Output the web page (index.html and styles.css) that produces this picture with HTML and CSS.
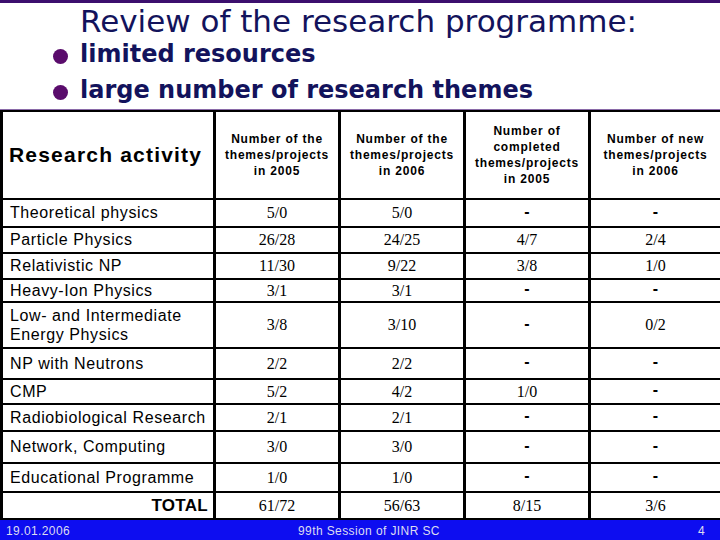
FILE: index.html
```html
<!DOCTYPE html>
<html>
<head>
<meta charset="utf-8">
<link rel="stylesheet" href="styles.css">
</head>
<body>
<div class="slide">
  <header class="head">
    <h1 class="title">Review of the research programme:</h1>
    <ul class="bullets">
      <li><span class="dot"></span>limited resources</li>
      <li><span class="dot"></span>large number of research themes</li>
    </ul>
  </header>
  <table class="grid">
    <colgroup>
      <col class="c1"><col class="c2"><col class="c3"><col class="c4"><col class="c5">
    </colgroup>
    <tr class="r-head">
      <th class="lbl big">Research activity</th>
      <th>Number of the themes/projects in 2005</th>
      <th>Number of the themes/projects in 2006</th>
      <th>Number of completed themes/projects in 2005</th>
      <th>Number of new themes/projects in 2006</th>
    </tr>
    <tr class="h28"><td class="lbl">Theoretical physics</td><td>5/0</td><td>5/0</td><td class="dash">-</td><td class="dash">-</td></tr>
    <tr class="h26"><td class="lbl">Particle Physics</td><td>26/28</td><td>24/25</td><td>4/7</td><td>2/4</td></tr>
    <tr class="h26"><td class="lbl">Relativistic NP</td><td>11/30</td><td>9/22</td><td>3/8</td><td>1/0</td></tr>
    <tr class="h22"><td class="lbl">Heavy-Ion Physics</td><td>3/1</td><td>3/1</td><td class="dash">-</td><td class="dash">-</td></tr>
    <tr class="h46"><td class="lbl two">Low- and Intermediate Energy Physics</td><td>3/8</td><td>3/10</td><td class="dash">-</td><td>0/2</td></tr>
    <tr class="h31"><td class="lbl">NP with Neutrons</td><td>2/2</td><td>2/2</td><td class="dash">-</td><td class="dash">-</td></tr>
    <tr class="h25"><td class="lbl">CMP</td><td>5/2</td><td>4/2</td><td>1/0</td><td class="dash">-</td></tr>
    <tr class="h27"><td class="lbl">Radiobiological Research</td><td>2/1</td><td>2/1</td><td class="dash">-</td><td class="dash">-</td></tr>
    <tr class="h32"><td class="lbl">Network, Computing</td><td>3/0</td><td>3/0</td><td class="dash">-</td><td class="dash">-</td></tr>
    <tr class="h29"><td class="lbl">Educational Programme</td><td>1/0</td><td>1/0</td><td class="dash">-</td><td class="dash">-</td></tr>
    <tr class="h27"><td class="lbl total">TOTAL</td><td>61/72</td><td>56/63</td><td>8/15</td><td>3/6</td></tr>
  </table>
  <footer class="foot">
    <span class="f-date">19.01.2006</span>
    <span class="f-mid">99th Session of JINR SC</span>
    <span class="f-num">4</span>
  </footer>
</div>
</body>
</html>
```

FILE: styles.css
```css
html, body {
  margin: 0;
  padding: 0;
  background: #fff;
}
.slide {
  width: 720px;
  height: 540px;
  display: flex;
  flex-direction: column;
  overflow: hidden;
  background: #fff;
}
.head {
  height: 103px;
  border-top: 3px solid #3c0f6e;
  border-bottom: 1px solid #8a6aa8;
  padding-top: 3px;
  box-sizing: content-box;
  color: #13135c;
  font-family: "DejaVu Sans", sans-serif;
}
.title {
  margin: 0;
  padding-left: 80px;
  font-size: 31px;
  font-weight: normal;
  line-height: 31px;
  white-space: nowrap;
}
.bullets {
  list-style: none;
  margin: -1px 0 0 0;
  padding: 0 0 0 53px;
  font-size: 24px;
  font-weight: bold;
  line-height: 36px;
}
.bullets li {
  display: flex;
  align-items: center;
  white-space: nowrap;
}
.dot {
  width: 15px;
  height: 15px;
  border-radius: 50%;
  background: #5a0c6c;
  margin: 5px 12px 0 0;
  flex: none;
}
.grid {
  border-collapse: collapse;
  table-layout: fixed;
  width: 720px;
  flex: none;
}
.c1 { width: 213px; }
.c2 { width: 125px; }
.c3 { width: 125px; }
.c4 { width: 125px; }
.c5 { width: 132px; }
.grid th, .grid td {
  border-top: 2px solid #000;
  border-bottom: 2px solid #000;
  border-left: 3px solid #000;
  border-right: 3px solid #000;
  padding: 0;
  text-align: center;
  vertical-align: middle;
  color: #000;
}
.grid td {
  font-family: "Liberation Serif", "Times New Roman", serif;
  font-size: 16px;
}
.grid th {
  font-family: "Liberation Sans", Arial, sans-serif;
  font-size: 12px;
  font-weight: bold;
  letter-spacing: 0.8px;
  line-height: 16px;
  padding: 0 6px;
}
.r-head { height: 88px; }
.grid .lbl {
  text-align: left;
  padding-left: 7px;
  font-family: "Liberation Sans", Arial, sans-serif;
  font-size: 16px;
  font-weight: normal;
  letter-spacing: 0.6px;
  white-space: nowrap;
}
.grid .lbl.two {
  white-space: normal;
  line-height: 19px;
}
.grid .lbl.big {
  font-size: 21px;
  font-weight: bold;
  letter-spacing: 1.2px;
  padding-left: 6px;
}
.grid .lbl.total {
  text-align: right;
  padding-right: 5px;
  font-size: 17px;
  font-weight: bold;
  letter-spacing: 0.3px;
}
.grid .dash {
  font-family: "Liberation Sans", Arial, sans-serif;
  font-weight: bold;
  font-size: 16px;
  padding-bottom: 3px;
}
.h22 { height: 22px; }
.h25 { height: 25px; }
.h26 { height: 26px; }
.h27 { height: 27px; }
.h28 { height: 28px; }
.h29 { height: 29px; }
.h31 { height: 31px; }
.h32 { height: 32px; }
.h46 { height: 46px; }
.foot {
  flex: 1;
  display: flex;
  align-items: center;
  background: #0d0df0;
  color: #dcdcf0;
  font-family: "Liberation Sans", Arial, sans-serif;
  font-size: 12px;
  letter-spacing: 0.4px;
  padding-top: 2px;
  position: relative;
}
.f-date { padding-left: 6px; }
.f-mid {
  position: absolute;
  left: 298px;
}
.f-num {
  margin-left: auto;
  padding-right: 15px;
}
```
